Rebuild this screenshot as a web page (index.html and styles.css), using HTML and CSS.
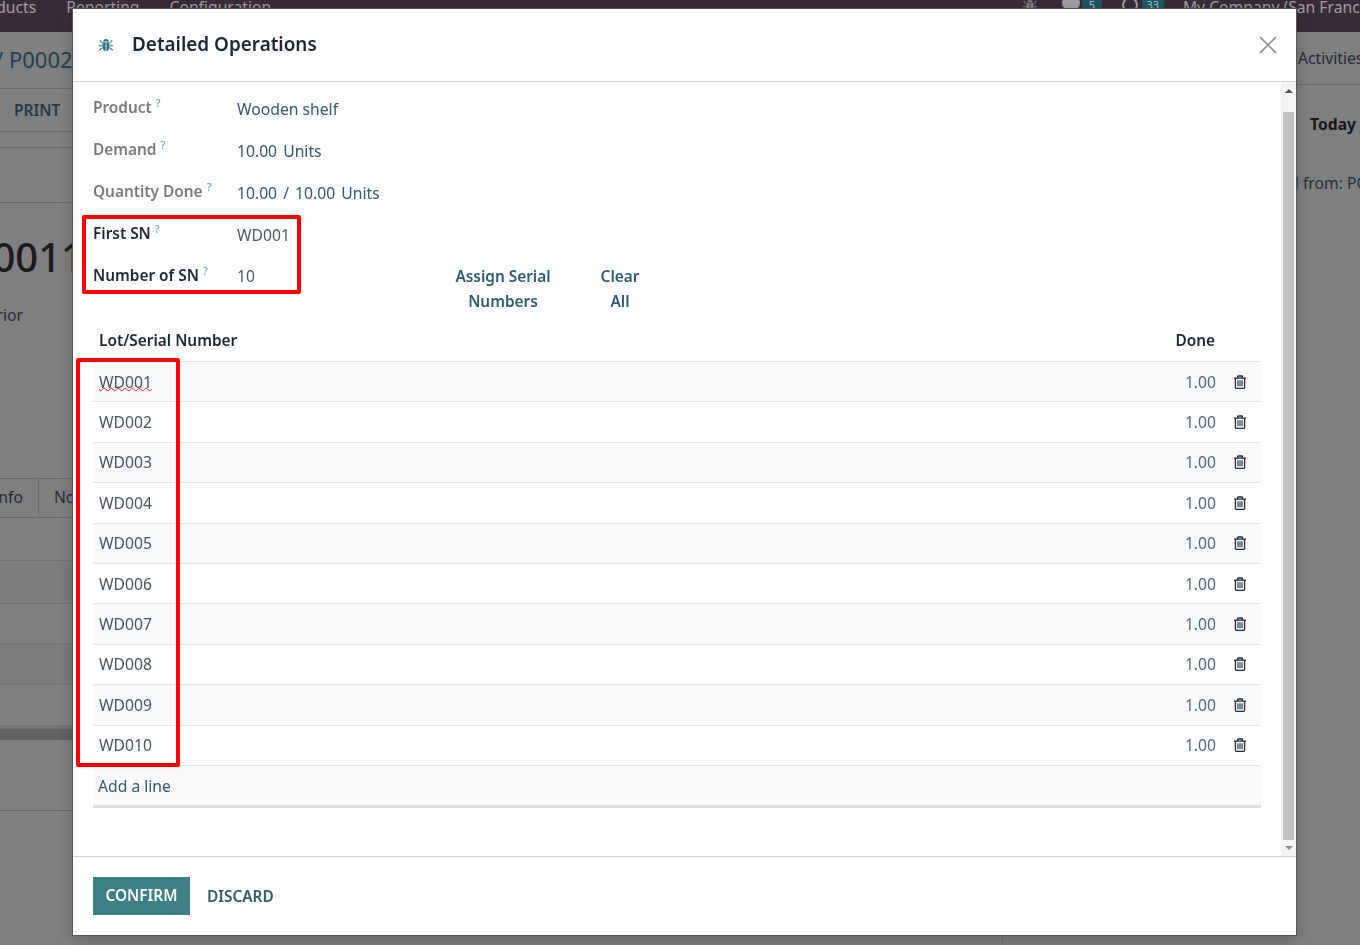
FILE: index.html
```html
<!DOCTYPE html>
<html lang="en">
<head>
<meta charset="utf-8">
<title>Detailed Operations</title>
<link rel="stylesheet" href="styles.css">
</head>
<body>
<div class="page">
  <nav class="nav">
    <div class="nav-left">
      <span class="nav-first">Products</span>
      <span>Reporting</span>
      <span>Configuration</span>
    </div>
    <div class="nav-right">
      <svg class="nav-bug" viewBox="0 0 16 16" width="16" height="16"><use href="#bug"/></svg>
      <span class="nav-blob"></span><span class="nav-badge">5</span>
      <span class="nav-clock"></span><span class="nav-badge nav-badge-wide">33</span>
      <span class="nav-company">My Company (San Francisco)</span>
    </div>
  </nav>
  <div class="under">
    <main class="sheet">
      <div class="crumb"><span class="crumb-text">/ P00020</span></div>
      <div class="actions"><span class="print">PRINT</span></div>
      <div class="status"></div>
      <div class="spacer"></div>
      <div class="big">WH/IN/00011</div>
      <div class="loc">Interior</div>
      <div class="tabs"><span class="tab">Info</span><span class="tab">Note</span></div>
      <div class="bg-row bg-r1"></div>
      <div class="bg-row bg-r2"></div>
      <div class="bg-row bg-r3"></div>
      <div class="bg-row bg-r4"></div>
      <div class="bg-row bg-r5"></div>
      <div class="band"></div>
      <div class="bg-end"></div>
    </main>
    <aside class="chatter">
      <div class="chat-head"><span class="activities">Activities</span></div>
      <div class="today">Today</div>
      <div class="created">Created from: PO</div>
    </aside>
  </div>
</div>

<div class="modal">
  <header class="m-head">
    <svg class="m-bug" viewBox="0 0 16 16" width="16" height="16">
      <g id="bug" fill="currentColor">
        <path d="M5.2 4.4C5.4 2.9 6.5 2 8 2s2.6.9 2.8 2.4z"/>
        <path d="M4.5 5.2h3.1v8.9C5.8 13.9 4.5 12.3 4.5 10zM8.4 5.2h3.1V10c0 2.3-1.3 3.9-3.1 4.1z"/>
        <path d="M1.4 3.6l.8-.6 2.2 2.4-.7.6zM14.6 3.6l-.8-.6-2.2 2.4.7.6zM.8 8.2h3.5v1H.8zM11.7 8.2h3.5v1h-3.5zM1.4 13.8l-.7-.7 3-2.5.6.8zM14.6 13.8l.7-.7-3-2.5-.6.8z"/>
      </g>
    </svg>
    <h1 class="m-title">Detailed Operations</h1>
    <svg class="m-close" viewBox="0 0 18 18" width="18" height="18"><path d="M1 1l16 16M17 1L1 17" fill="none" stroke="currentColor" stroke-width="1.7"/></svg>
  </header>
  <div class="m-body">
    <div class="m-scroll">
      <div class="f-row"><span class="f-label">Product<sup>?</sup></span><span class="f-val">Wooden shelf</span></div>
      <div class="f-row"><span class="f-label">Demand<sup>?</sup></span><span class="f-val f-num">10.00 Units</span></div>
      <div class="f-row"><span class="f-label">Quantity Done<sup>?</sup></span><span class="f-val f-num">10.00 / 10.00 Units</span></div>
      <div class="f-row"><span class="f-label f-strong">First SN<sup>?</sup></span><span class="f-val f-input">WD001</span></div>
      <div class="f-row f-last">
        <span class="f-label f-strong">Number of SN<sup>?</sup></span><span class="f-val f-input f-short">10</span>
        <span class="link link-assign">Assign Serial Numbers</span>
        <span class="link link-clear">Clear All</span>
      </div>
      <div class="t-head"><span>Lot/Serial Number</span><span class="t-done">Done</span></div>
      <div class="t-row"><span class="t-sn t-wavy">WD001</span><span class="t-qty">1.00</span><svg class="trash" viewBox="0 0 14 14" width="14" height="14"><use href="#trash"/></svg></div>
      <div class="t-row"><span class="t-sn">WD002</span><span class="t-qty">1.00</span><svg class="trash" viewBox="0 0 14 14" width="14" height="14"><use href="#trash"/></svg></div>
      <div class="t-row"><span class="t-sn">WD003</span><span class="t-qty">1.00</span><svg class="trash" viewBox="0 0 14 14" width="14" height="14"><use href="#trash"/></svg></div>
      <div class="t-row"><span class="t-sn">WD004</span><span class="t-qty">1.00</span><svg class="trash" viewBox="0 0 14 14" width="14" height="14"><use href="#trash"/></svg></div>
      <div class="t-row"><span class="t-sn">WD005</span><span class="t-qty">1.00</span><svg class="trash" viewBox="0 0 14 14" width="14" height="14"><use href="#trash"/></svg></div>
      <div class="t-row"><span class="t-sn">WD006</span><span class="t-qty">1.00</span><svg class="trash" viewBox="0 0 14 14" width="14" height="14"><use href="#trash"/></svg></div>
      <div class="t-row"><span class="t-sn">WD007</span><span class="t-qty">1.00</span><svg class="trash" viewBox="0 0 14 14" width="14" height="14"><use href="#trash"/></svg></div>
      <div class="t-row"><span class="t-sn">WD008</span><span class="t-qty">1.00</span><svg class="trash" viewBox="0 0 14 14" width="14" height="14"><use href="#trash"/></svg></div>
      <div class="t-row"><span class="t-sn">WD009</span><span class="t-qty">1.00</span><svg class="trash" viewBox="0 0 14 14" width="14" height="14"><use href="#trash"/></svg></div>
      <div class="t-row"><span class="t-sn">WD010</span><span class="t-qty">1.00</span><svg class="trash" viewBox="0 0 14 14" width="14" height="14"><use href="#trash"/></svg></div>
      <div class="t-add">Add a line</div>
    </div>
    <div class="sbar">
      <span class="sbar-up"></span>
      <span class="sbar-thumb"></span>
      <span class="sbar-down"></span>
    </div>
  </div>
  <footer class="m-foot">
    <span class="btn-confirm">CONFIRM</span>
    <span class="btn-discard">DISCARD</span>
  </footer>
  <div class="mark mark-sn"></div>
  <div class="mark mark-lots"></div>
</div>

<svg class="defs" width="0" height="0" aria-hidden="true">
  <defs>
    <g id="trash">
      <path d="M1 3.1h12M4.6 3V1.6c0-.4.2-.6.6-.6h3.6c.4 0 .6.2.6.6V3" fill="none" stroke="currentColor" stroke-width="1.3"/>
      <path d="M2.4 3.2v8.9c0 .8.4 1.3 1.1 1.3h7c.7 0 1.1-.5 1.1-1.3V3.2" fill="none" stroke="currentColor" stroke-width="1.3"/>
      <path d="M5 5.3v5.9M7 5.3v5.9M9 5.3v5.9" fill="none" stroke="currentColor" stroke-width="1.1"/>
    </g>
  </defs>
</svg>
</body>
</html>
```
FILE: styles.css
```css
* { box-sizing: border-box; }
html, body { margin: 0; height: 100%; overflow: hidden; }
body { font-family: "Noto Sans", "Liberation Sans", sans-serif; font-size: 15.7px; background: #7f7f7f; color: #2a3a48; }
.defs { position: absolute; }

.page { height: 945px; display: flex; flex-direction: column; }
.nav { height: 32px; flex: none; background: #3a2b38; color: #a39ba2; display: flex; justify-content: space-between; font-size: 15.7px; line-height: 14px; overflow: hidden; }
.nav-left { display: flex; gap: 30px; margin-left: -29px; }
.nav-right { display: flex; align-items: flex-start; }
.nav-bug { color: #8b8189; margin-top: -2px; }
.nav-blob { width: 18px; height: 14px; border-radius: 9px; background: #a39ba2; margin: -4px 2px 0 24px; }
.nav-badge { width: 20px; height: 13px; background: #1f5565; color: #a9c3c9; font-size: 11px; line-height: 10px; text-align: center; }
.nav-badge-wide { width: 22px; }
.nav-clock { width: 16px; height: 16px; border: 2px solid #a39ba2; border-radius: 50%; margin: -3px 4px 0 20px; }
.nav-company { margin: 0 -33px 0 19px; white-space: nowrap; }

.under { flex: 1; display: flex; min-height: 0; }
.sheet { width: 1003px; flex: none; border-right: 1px solid #6a6a6a; overflow: hidden; }
.crumb { height: 57px; border-bottom: 1px solid #6a6a6a; font-size: 22px; line-height: 54px; color: #24404f; white-space: nowrap; }
.crumb-text { margin-left: -5px; }
.actions { height: 43px; border-bottom: 1px solid #6a6a6a; display: flex; align-items: center; padding-left: 14px; }
.print { font-weight: 600; font-size: 15.5px; color: #1f3a4a; }
.status { height: 16px; border-bottom: 1px solid #6a6a6a; }
.spacer { height: 55px; border-bottom: 1px solid #6a6a6a; }
.big { font-size: 40px; font-weight: 500; color: #1a1a20; height: 72px; line-height: 108px; margin-left: -174px; white-space: nowrap; }
.loc { height: 203px; padding-top: 32px; line-height: 16px; margin-left: -33px; color: #2b2b30; }
.tabs { height: 40px; border-top: 1px solid #6a6a6a; border-bottom: 1px solid #6a6a6a; display: flex; color: #2d2d35; line-height: 36px; }
.tab { border-right: 1px solid #6a6a6a; padding: 0 15px; }
.tab:first-child { margin-left: -22px; }
.bg-row { border-bottom: 1px solid #727272; }
.bg-r1 { height: 43px; }
.bg-r2 { height: 43px; background: #7c7c7c; }
.bg-r3 { height: 40px; }
.bg-r4 { height: 41px; background: #7c7c7c; }
.bg-r5 { height: 40px; border-bottom: 0; }
.band { height: 15px; border-top: 4px solid #747474; background: #636363; }
.bg-end { height: 71px; border-bottom: 1px solid #666; }

.chatter { flex: 1; min-width: 0; overflow: hidden; }
.chat-head { height: 53px; border-bottom: 1px solid #6a6a6a; padding-left: 295px; white-space: nowrap; }
.activities { display: block; padding-top: 14px; color: #2b2b36; line-height: 24px; }
.today { margin: 27px 0 0 307px; font-weight: 700; color: #17171c; line-height: 24px; white-space: nowrap; }
.created { margin: 35px 0 0 238px; color: #26323c; line-height: 24px; white-space: nowrap; }

.modal { position: fixed; left: 73px; top: 9px; width: 1223px; height: 926px; background: #fff; display: flex; flex-direction: column; box-shadow: 0 0 0 1px #555, 0 4px 14px rgba(0,0,0,.25); }
.m-head { height: 73px; flex: none; border-bottom: 1px solid #cfcfcf; display: flex; align-items: center; padding: 0 19px 1px 25px; }
.m-bug { color: #2c6f83; flex: none; }
.m-title { margin: 0 0 2px 18px; font-size: 18.9px; font-weight: 600; color: #1d2530; flex: 1; line-height: 28px; }
.m-close { color: #8a8a8a; flex: none; }

.m-body { flex: 1; display: flex; min-height: 0; }
.m-scroll { flex: 1; padding: 6px 20px 0; min-width: 0; }
.f-row { height: 42px; display: flex; align-items: center; }
.f-label { width: 144px; flex: none; color: #7b7b7b; font-size: 15.4px; font-weight: 600; white-space: nowrap; margin-bottom: 3px; }
.f-strong { color: #1f2630; }
sup { color: #5d9ac2; font-size: 11px; font-weight: 400; line-height: 0; margin-left: 4px; vertical-align: 6px; }
.f-val { color: #32596c; white-space: nowrap; }
.f-num { word-spacing: 2px; }
.f-input { color: #4a5a66; }
.f-last { height: 67px; align-items: flex-start; padding-top: 8px; }
.f-last span { line-height: 25px; }
.f-last .f-label { margin: -1px 0 0; }
.f-short { width: 206px; }
.link { color: #2f5d70; font-size: 15.4px; font-weight: 600; text-align: center; flex: none; }
.link-assign { width: 120px; }
.link-clear { width: 50px; margin-left: 32px; }

.t-head { height: 39px; border-bottom: 1px solid #e2e2e2; display: flex; justify-content: space-between; align-items: center; padding: 0 46px 3px 6px; font-size: 15.4px; font-weight: 600; color: #1f2630; }
.t-row { height: 40.4px; border-bottom: 1px solid #e2e2e2; display: flex; align-items: center; padding-left: 6px; color: #4a5560; }
.t-row:nth-of-type(odd) { background: #fafafa; }
.t-sn { flex: 1; }
.t-wavy { text-decoration: underline wavy #e02020 1px; text-underline-offset: -1px; text-decoration-skip-ink: none; flex: none; margin-right: auto; }
.t-qty { color: #4a6a85; }
.trash { color: #1b2a36; margin: 0 14px 0 17px; flex: none; }
.t-add { height: 42px; background: #fafafa; border-bottom: 3px solid #e0e0e4; padding-left: 5px; line-height: 41px; color: #32596c; }

.sbar { width: 15px; flex: none; background: #f3f4f4; display: flex; flex-direction: column; align-items: center; padding: 0 2px 0 0; }
.sbar-up { width: 0; height: 0; border: 4px solid transparent; border-top: 0; border-bottom: 4px solid #50505a; margin: 7px 0 0 2px; }
.sbar-thumb { width: 11px; flex: 1; background: #c1c1c1; margin-top: 19px; margin-left: 2px; }
.sbar-down { width: 0; height: 0; border: 4px solid transparent; border-bottom: 0; border-top: 4px solid #8e8e8e; margin: 6px 0 6px 2px; }

.m-foot { height: 79px; flex: none; border-top: 1px solid #cfcfcf; display: flex; align-items: center; padding: 0 20px; }
.btn-confirm { width: 97px; height: 38px; background: #3d8085; color: #fff; font-size: 15.4px; font-weight: 600; line-height: 38px; text-align: center; }
.btn-discard { margin-left: 17px; color: #2f5d70; font-size: 15.4px; font-weight: 600; }

.mark { position: absolute; border: 4px solid #f00; border-radius: 2px; pointer-events: none; }
.mark-sn { left: 9px; top: 206px; width: 219px; height: 79px; }
.mark-lots { left: 3px; top: 349px; width: 104px; height: 409px; }
```
